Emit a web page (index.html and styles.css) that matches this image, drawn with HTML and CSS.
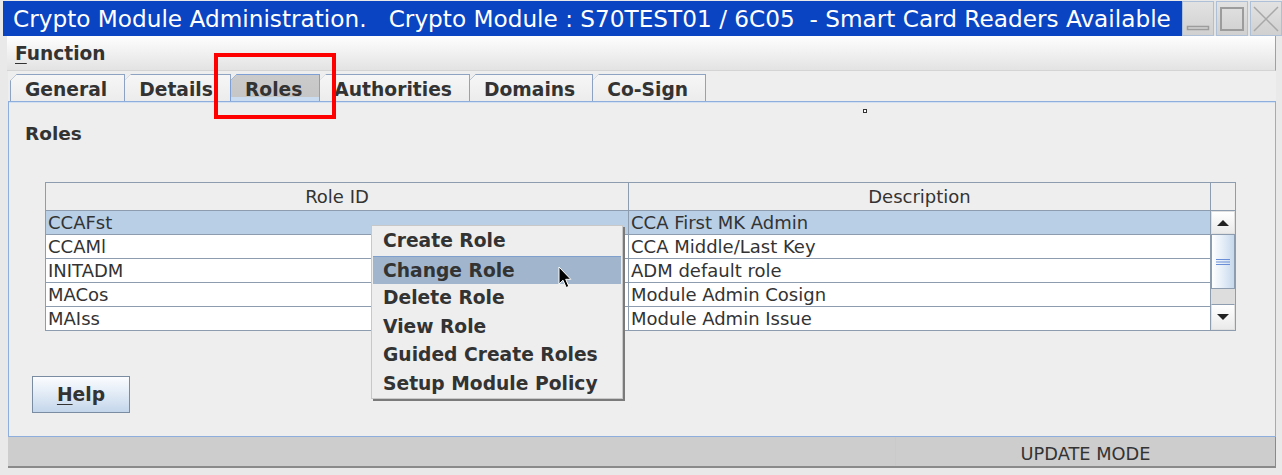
FILE: index.html
```html
<!DOCTYPE html>
<html>
<head>
<meta charset="utf-8">
<link rel="stylesheet" href="styles.css">
</head>
<body>
<div class="window">
  <div class="titlebar">
    <span class="title">Crypto Module Administration.   Crypto Module : S70TEST01 / 6C05  - Smart Card Readers Available</span>
    <div class="wbtns">
      <span class="wbtn"><svg width="28" height="28" viewBox="0 0 28 28"><rect x="3.5" y="21.5" width="21" height="3" fill="none" stroke="#9c9c9c" stroke-width="1.5"/></svg></span>
      <span class="wbtn"><svg width="28" height="28" viewBox="0 0 28 28"><rect x="3" y="3" width="22" height="22" fill="none" stroke="#9c9c9c" stroke-width="2"/></svg></span>
      <span class="wbtn"><svg width="28" height="28" viewBox="0 0 28 28"><path d="M2 2 L26 26 M26 2 L2 26" stroke="#a8a8a8" stroke-width="1.5" fill="none"/></svg></span>
    </div>
  </div>
  <div class="main">
    <div class="menubar"><span class="menu"><u>F</u>unction</span></div>
    <div class="tabs">
      <span class="tab">General</span>
      <span class="tab">Details</span>
      <span class="tab selected">Roles</span>
      <span class="tab">Authorities</span>
      <span class="tab">Domains</span>
      <span class="tab">Co-Sign</span>
    </div>
    <div class="panel">
      <div class="ptitle">Roles</div>
      <div class="table">
        <div class="thead">
          <div class="th">Role ID</div>
          <div class="th">Description</div>
          <div class="th last"></div>
        </div>
        <div class="tbody">
          <div class="rows">
            <div class="row sel"><div class="td">CCAFst</div><div class="td">CCA First MK Admin</div></div>
            <div class="row"><div class="td">CCAMl</div><div class="td">CCA Middle/Last Key</div></div>
            <div class="row"><div class="td">INITADM</div><div class="td">ADM default role</div></div>
            <div class="row"><div class="td">MACos</div><div class="td">Module Admin Cosign</div></div>
            <div class="row"><div class="td">MAIss</div><div class="td">Module Admin Issue</div></div>
          </div>
          <div class="vscroll">
            <div class="sbtn up"><svg width="12" height="8" viewBox="0 0 12 8"><polygon points="0,7 6,1 12,7" fill="#222"/></svg></div>
            <div class="thumb"><svg width="14" height="8" viewBox="0 0 14 8"><path d="M0 1.5 H14 M0 4 H14 M0 6.5 H14" stroke="#6a8fd8" stroke-width="1"/></svg></div>
            <div class="track"></div>
            <div class="sbtn down"><svg width="12" height="8" viewBox="0 0 12 8"><polygon points="0,1 12,1 6,7" fill="#222"/></svg></div>
          </div>
        </div>
      </div>
      <button class="help"><u>H</u>elp</button>
    </div>
    <div class="status">
      <div class="seg1"></div>
      <div class="seg2">UPDATE MODE</div>
    </div>
  </div>

  <div class="popup">
    <div class="item">Create Role</div>
    <div class="item hover">Change Role</div>
    <div class="item">Delete Role</div>
    <div class="item">View Role</div>
    <div class="item">Guided Create Roles</div>
    <div class="item">Setup Module Policy</div>
  </div>

  <svg class="cursor" width="14" height="24" viewBox="0 0 14 24"><path d="M1 1 V18 L5 14.2 L8.2 21.5 L10.8 20.4 L7.7 13.3 H12.8 Z" fill="#000" stroke="#fff" stroke-width="1"/></svg>

  <div class="redbox"></div>
  <div class="dot"></div>
</div>
</body>
</html>
```

FILE: styles.css
```css
* { box-sizing: border-box; }
html, body { margin: 0; padding: 0; }
body {
  width: 1282px;
  height: 475px;
  overflow: hidden;
  background: #e9e9e9;
  font-family: "DejaVu Sans", Verdana, sans-serif;
  font-size: 18px;
  color: #333;
}
.window { position: relative; width: 1282px; height: 475px; }

.titlebar {
  display: flex;
  align-items: center;
  height: 35px;
  margin: 1px 0 0 3px;
  background: #0a44c2;
  color: #fff;
}
.title {
  flex: 1;
  white-space: pre;
  font-size: 23.2px;
  line-height: 34px;
  padding-left: 10px;
  overflow: hidden;
}
.wbtns { display: flex; gap: 2px; align-self: stretch; background: #e4e4e4; }
.wbtn {
  width: 32px;
  height: 35px;
  background: linear-gradient(#e2e2e2, #d0d0d0);
  border: 1px solid #aebfd8;
  display: flex;
  align-items: center;
  justify-content: center;
}

.main { padding: 0 6px 0 8px; }
.menubar {
  height: 35px;
  margin-left: -1px;
  padding-left: 8px;
  display: flex;
  align-items: center;
  background: linear-gradient(#fefefe, #e3e3e3);
  border-bottom: 1px solid #d4d4d4;
  border-right: 1px solid #a0a0a0;
  font-weight: bold;
  font-size: 18.6px;
}
.menu u { text-decoration-thickness: 1px; text-underline-offset: 3px; }

.tabs {
  height: 30px;
  display: flex;
  align-items: flex-end;
  padding-left: 2px;
  background: #eeeeee;
}
.tab {
  position: relative;
  height: 27px;
  padding: 1px 17px 0 14px;
  line-height: 27px;
  font-weight: bold;
  font-size: 18.7px;
  background: linear-gradient(#f6f6f6, #ececec);
  border: 1px solid #8ea3c2;
  border-bottom: none;
  margin-right: -1px;
  clip-path: polygon(7px 0, 100% 0, 100% 100%, 0 100%, 0 7px);
}
.tab::before {
  content: "";
  position: absolute;
  left: -1px;
  top: -1px;
  width: 9px;
  height: 9px;
  background: linear-gradient(135deg, transparent 4.3px, #8ea3c2 4.3px, #8ea3c2 5.5px, transparent 5.5px);
}
.tab.selected {
  background: linear-gradient(#cbcbcb 0, #c6c6c6 22px, #c9dcf0 22px);
  border-color: #7d9fd6;
}
.tab.selected::before {
  background: linear-gradient(135deg, transparent 4.3px, #7d9fd6 4.3px, #7d9fd6 5.5px, transparent 5.5px);
}

.panel {
  height: 336px;
  background: #eeeeee;
  border: 1px solid #8eaedd;
  box-shadow: inset 0 1px 0 #d2e0f2;
  padding-top: 21px;
}
.ptitle {
  font-weight: bold;
  line-height: 21px;
  margin-left: 16px;
  font-size: 18.5px;
}

.table {
  margin: 38px 0 0 36px;
  width: 1191px;
  border: 1px solid #8d9cae;
  background: #eeeeee;
}
.thead {
  display: grid;
  grid-template-columns: 583px 582px 1fr;
  height: 28px;
  border-bottom: 1px solid #8d9cae;
}
.th {
  text-align: center;
  line-height: 27px;
  border-right: 1px solid #8d9cae;
}
.th.last { border-right: none; }
.tbody { display: flex; height: 119px; }
.rows { width: 1165px; overflow: hidden; }
.row {
  display: grid;
  grid-template-columns: 583px 582px;
  height: 24px;
  background: #fff;
  border-bottom: 1px solid #8d9cae;
}
.row.sel { background: #b8cfe5; }
.td {
  padding-left: 2px;
  line-height: 23px;
  white-space: nowrap;
  border-right: 1px solid #8d9cae;
}
.vscroll {
  width: 24px;
  display: flex;
  flex-direction: column;
  background: #eeeeee;
}
.sbtn {
  display: flex;
  align-items: center;
  justify-content: center;
  background: linear-gradient(#ffffff, #eaeaea);
  border: 1px solid #e0e0e0;
}
.sbtn.up { height: 23px; }
.sbtn.down { height: 26px; border-top: 1px solid #8d9cae; }
.thumb {
  height: 55px;
  display: flex;
  align-items: center;
  justify-content: center;
  background: linear-gradient(90deg, #ffffff, #e4edf7 50%, #c6d8ec);
  border: 1px solid #8d9cae;
}
.track { height: 15px; background: #dddddd; }

.help {
  display: block;
  margin: 45px 0 0 23px;
  width: 98px;
  height: 37px;
  font-family: "DejaVu Sans", Verdana, sans-serif;
  font-size: 18.7px;
  font-weight: bold;
  color: #333;
  background: linear-gradient(#fbfcfe, #e3ecf6 45%, #c4d6eb);
  border: 1px solid #7a8ca2;
  padding: 0;
}
.help u { text-decoration-thickness: 1px; text-underline-offset: 3px; }

.status {
  display: flex;
  height: 31px;
  background: #cdcdcd;
  border-bottom: 2px solid #8a8a8a;
  border-right: 1px solid #8a8a8a;
}
.seg1 { width: 888px; border-right: 1px solid #b9cde6; }
.seg2 {
  flex: 1;
  text-align: center;
  line-height: 29px;
  padding-top: 2px;
  font-size: 17.8px;
  color: #333;
}

.popup {
  position: absolute;
  left: 371px;
  top: 224px;
  width: 252px;
  height: 174px;
  background: #eeeeee;
  border: 1px solid #c8c8c8;
  box-shadow: 2px 2px 0 #7a7a7a;
  padding: 1px;
}
.item {
  height: 28.5px;
  line-height: 28px;
  padding-left: 10px;
  font-weight: bold;
  font-size: 18.7px;
  white-space: nowrap;
}
.item.hover {
  background: #a1b6cc;
  border-top: 1px solid #7f9fcc;
  line-height: 27px;
}

.cursor { position: absolute; left: 558px; top: 265px; }

.redbox {
  position: absolute;
  left: 214px;
  top: 52px;
  width: 122px;
  height: 66px;
  border: 4px solid #ff0000;
}
.dot {
  position: absolute;
  left: 863px;
  top: 108px;
  width: 4px;
  height: 4px;
  border: 1px solid #333;
  background: #fff;
}
```
